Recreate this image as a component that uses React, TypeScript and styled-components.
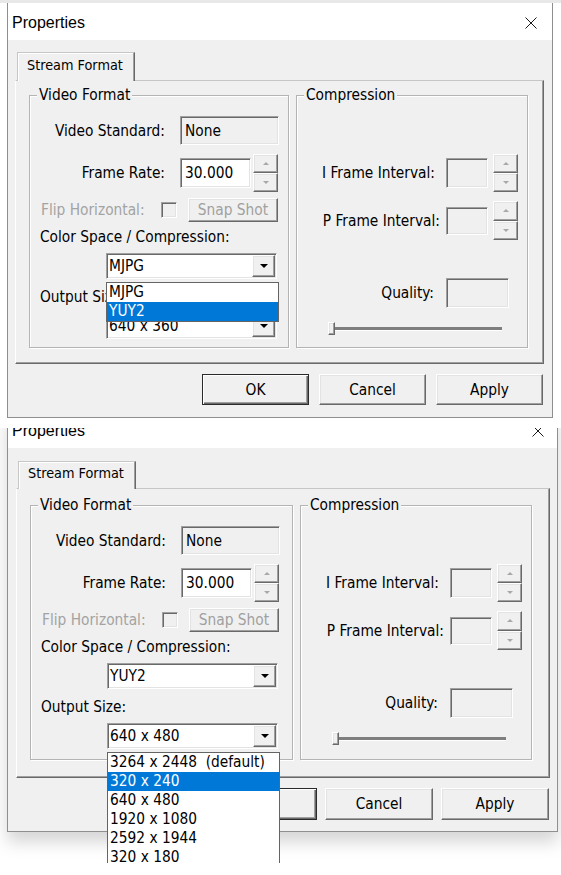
import React from 'react';
import styled, { createGlobalStyle, css } from 'styled-components';

const GlobalStyle = createGlobalStyle`
  html, body { margin: 0; padding: 0; background: #ffffff; }
  body {
    font-family: "DejaVu Sans Condensed", "DejaVu Sans", sans-serif;
    font-stretch: condensed;
    font-size: 15.3px;
    color: #000000;
  }
  * { box-sizing: border-box; }
`;

const sunken = css`
  border: 1px solid;
  border-color: #a0a0a0 #ffffff #ffffff #a0a0a0;
  box-shadow: inset 1px 1px 0 #696969, inset -1px -1px 0 #e3e3e3;
`;

const raised = css`
  border: 1px solid;
  border-color: #ffffff #696969 #696969 #ffffff;
  box-shadow: inset -1px -1px 0 #a0a0a0, inset 1px 1px 0 #e3e3e3;
`;

const Page = styled.div`
  width: 561px;
  height: 875px;
  overflow: hidden;
  background: #ffffff;
  display: flex;
  flex-direction: column;
`;

const TopEdge = styled.div`
  flex: none;
  height: 3px;
  background: #e8e8e8;
`;

const Seam = styled.div`
  flex: none;
  height: 10px;
`;

const Crop = styled.div`
  flex: none;
  height: 435px;
  overflow: hidden;
`;

const Window = styled.div<{ $w: number; $mt: number; $shadow: boolean }>`
  flex: none;
  position: relative;
  width: ${p => p.$w}px;
  margin: ${p => p.$mt}px 0 0 7px;
  border: 1px solid #8f8f8f;
  border-top: 0;
  background: #f0f0f0;
  display: flex;
  flex-direction: column;
  ${p => p.$shadow && css`box-shadow: 0 10px 16px rgba(0, 0, 0, 0.17);`}
`;

const TitleBar = styled.div<{ $pr: number }>`
  flex: none;
  height: 37px;
  background: #ffffff;
  display: flex;
  align-items: flex-start;
  justify-content: space-between;
  padding: 11px ${p => p.$pr}px 0 4px;
`;

const TitleText = styled.span`
  font-family: "Liberation Sans", Arial, sans-serif;
  font-stretch: normal;
  font-size: 16px;
  line-height: 18px;
  color: #000000;
`;

const CloseGlyph = styled.svg`
  flex: none;
  margin-top: 3px;
`;

const Body = styled.div<{ $pt: number; $pb: number }>`
  display: flex;
  flex-direction: column;
  padding: ${p => p.$pt}px 0 ${p => p.$pb}px;
`;

const TabStrip = styled.div<{ $pl: number }>`
  position: relative;
  z-index: 1;
  display: flex;
  padding-left: ${p => p.$pl}px;
  margin-bottom: -1px;
`;

const Tab = styled.div<{ $h: number; $pt: number }>`
  width: 118px;
  height: ${p => p.$h}px;
  padding: ${p => p.$pt}px 0 0 9px;
  font-size: 14.3px;
  line-height: 18px;
  background: #f0f0f0;
  border-top: 1px solid #c6c6c6;
  border-left: 1px solid #c6c6c6;
  border-right: 1px solid #696969;
  box-shadow: inset -1px 0 0 #a0a0a0, inset 1px 1px 0 #ffffff;
  white-space: nowrap;
`;

const Panel = styled.div<{ $ml: number; $mr: number; $pt: number; $pb: number; $pl: number }>`
  display: flex;
  align-items: flex-start;
  gap: 7px;
  margin: 0 ${p => p.$mr}px 0 ${p => p.$ml}px;
  padding: ${p => p.$pt}px 0 ${p => p.$pb}px ${p => p.$pl}px;
  border-top: 1px solid #c6c6c6;
  border-left: 1px solid #ffffff;
  border-right: 1px solid #696969;
  border-bottom: 1px solid #696969;
  box-shadow: inset -1px -1px 0 #a0a0a0;
`;

const Group = styled.fieldset<{ $w: number; $h: number }>`
  flex: none;
  margin: 0;
  padding: 0;
  min-width: 0;
  width: ${p => p.$w}px;
  height: ${p => p.$h}px;
  border: 1px solid #b4b4b4;
  box-shadow: inset 1px 1px 0 #ffffff, 1px 1px 0 #ffffff;
`;

const Caption = styled.legend`
  margin-left: 7px;
  padding: 0 2px;
  line-height: 17px;
  background: #f0f0f0;
  white-space: nowrap;
`;

const GroupBody = styled.div<{ $pl: number }>`
  display: flex;
  flex-direction: column;
  padding-left: ${p => p.$pl}px;
`;

const Row = styled.div<{ $mt: number; $h: number }>`
  flex: none;
  display: flex;
  align-items: center;
  margin-top: ${p => p.$mt}px;
  height: ${p => p.$h}px;
`;

const FieldLabel = styled.span<{ $w: number; $pr?: number; $pl?: number; $left?: boolean; $muted?: boolean }>`
  flex: none;
  width: ${p => p.$w}px;
  padding-right: ${p => p.$pr ?? 0}px;
  padding-left: ${p => p.$pl ?? 0}px;
  text-align: ${p => (p.$left ? 'left' : 'right')};
  line-height: 18px;
  white-space: nowrap;
  color: ${p => (p.$muted ? '#a3a3a3' : '#000000')};
`;

const PlainLabel = styled.div<{ $mt: number }>`
  flex: none;
  margin-top: ${p => p.$mt}px;
  line-height: 18px;
  white-space: nowrap;
`;

const TextBox = styled.div<{ $w: number; $h: number; $readOnly?: boolean }>`
  ${sunken};
  flex: none;
  width: ${p => p.$w}px;
  height: ${p => p.$h}px;
  padding-left: 4px;
  display: flex;
  align-items: center;
  line-height: 18px;
  background: ${p => (p.$readOnly ? '#f0f0f0' : '#ffffff')};
`;

const Spin = styled.div<{ $h: number; $ml: number }>`
  flex: none;
  width: 25px;
  height: ${p => p.$h}px;
  margin-left: ${p => p.$ml}px;
  display: flex;
  flex-direction: column;
`;

const SpinButton = styled.div`
  ${raised};
  flex: 1;
  display: flex;
  align-items: center;
  justify-content: center;
  background: #f0f0f0;
`;

const Triangle = styled.span<{ $up?: boolean; $half: number; $h: number; $color: string }>`
  display: block;
  width: 0;
  height: 0;
  border-left: ${p => p.$half}px solid transparent;
  border-right: ${p => p.$half}px solid transparent;
  ${p =>
    p.$up
      ? css`border-bottom: ${p.$h}px solid ${p.$color};`
      : css`border-top: ${p.$h}px solid ${p.$color};`}
`;

const CheckBox = styled.span`
  ${sunken};
  flex: none;
  width: 16px;
  height: 16px;
  background: #f0f0f0;
`;

const PushButton = styled.button<{ $w: number; $h: number; $ml?: number; $isDefault?: boolean }>`
  ${raised};
  flex: none;
  width: ${p => p.$w}px;
  height: ${p => p.$h}px;
  margin: 0 0 0 ${p => p.$ml ?? 0}px;
  padding: 0;
  font: inherit;
  font-stretch: condensed;
  line-height: 18px;
  background: #f0f0f0;
  color: #000000;
  &:disabled {
    color: #a0a0a0;
  }
  ${p =>
    p.$isDefault &&
    css`
      border: 1px solid #2a2a2a;
      box-shadow: inset 1px 1px 0 #ffffff, inset -1px -1px 0 #696969, inset -2px -2px 0 #a0a0a0;
    `}
`;

const ComboSlot = styled.div<{ $mt: number }>`
  flex: none;
  position: relative;
  margin: ${p => p.$mt}px 0 0 66px;
  width: 171px;
  height: 26px;
`;

const ComboBox = styled.div`
  ${sunken};
  height: 100%;
  padding: 1px;
  background: #ffffff;
  display: flex;
`;

const ComboValue = styled.span`
  flex: 1;
  padding-left: 1px;
  line-height: 22px;
  white-space: nowrap;
  overflow: hidden;
`;

const ComboButton = styled.span`
  ${raised};
  flex: none;
  width: 23px;
  display: flex;
  align-items: center;
  justify-content: center;
  background: #f0f0f0;
`;

const DropList = styled.ul`
  position: absolute;
  z-index: 10;
  top: calc(100% + 3px);
  left: 0;
  width: 173px;
  margin: 0;
  padding: 0;
  list-style: none;
  background: #ffffff;
  border: 1px solid #646464;
`;

const DropItem = styled.li<{ $selected?: boolean }>`
  height: 19px;
  line-height: 19px;
  padding-left: 2px;
  white-space: pre;
  background: ${p => (p.$selected ? '#0078d7' : '#ffffff')};
  color: ${p => (p.$selected ? '#ffffff' : '#000000')};
`;

const Slider = styled.div<{ $mt: number }>`
  flex: none;
  position: relative;
  margin: ${p => p.$mt}px 0 0 31px;
  width: 174px;
  height: 13px;
  &::before {
    content: '';
    position: absolute;
    left: 2px;
    right: 0;
    top: 5px;
    height: 3px;
    background: #7e7e7e;
    border-bottom: 1px solid #ffffff;
  }
`;

const SliderThumb = styled.span`
  ${raised};
  position: relative;
  display: block;
  width: 7px;
  height: 13px;
  background: #f0f0f0;
`;

const ButtonRow = styled.div<{ $gap: number; $pr: number; $mt: number }>`
  display: flex;
  justify-content: flex-end;
  gap: ${p => p.$gap}px;
  padding-right: ${p => p.$pr}px;
  margin-top: ${p => p.$mt}px;
`;

type Variant = {
  width: number;
  mt: number;
  shadow: boolean;
  closePr: number;
  bodyPt: number;
  bodyPb: number;
  tabPl: number;
  tabH: number;
  tabPt: number;
  panelMl: number;
  panelMr: number;
  panelPt: number;
  panelPb: number;
  panelPl: number;
  vfW: number;
  groupH: number;
  btnW: number;
  btnH: number;
  btnGap: number;
  btnPr: number;
  colorValue: string;
  outputValue: string;
  open: 'color' | 'output';
};

const colorItems = ['MJPG', 'YUY2'];
const sizeItems = [
  '3264 x 2448  (default)',
  '320 x 240',
  '640 x 480',
  '1920 x 1080',
  '2592 x 1944',
  '320 x 180',
  '1280 x 720',
];

const first: Variant = {
  width: 546,
  mt: 0,
  shadow: false,
  closePr: 15,
  bodyPt: 12,
  bodyPb: 12,
  tabPl: 9,
  tabH: 29,
  tabPt: 3,
  panelMl: 7,
  panelMr: 8,
  panelPt: 6,
  panelPb: 15,
  panelPl: 13,
  vfW: 260,
  groupH: 261,
  btnW: 107,
  btnH: 31,
  btnGap: 10,
  btnPr: 9,
  colorValue: 'MJPG',
  outputValue: '640 x 360',
  open: 'color',
};

const second: Variant = {
  width: 551,
  mt: -17,
  shadow: true,
  closePr: 13,
  bodyPt: 13,
  bodyPb: 11,
  tabPl: 10,
  tabH: 28,
  tabPt: 2,
  panelMl: 8,
  panelMr: 7,
  panelPt: 8,
  panelPb: 17,
  panelPl: 13,
  vfW: 263,
  groupH: 263,
  btnW: 108,
  btnH: 32,
  btnGap: 8,
  btnPr: 8,
  colorValue: 'YUY2',
  outputValue: '640 x 480',
  open: 'output',
};

function SpinControl({ h, ml }: { h: number; ml: number }) {
  return (
    <Spin $h={h} $ml={ml}>
      <SpinButton>
        <Triangle $up $half={3} $h={3} $color="#a8a8a8" />
      </SpinButton>
      <SpinButton>
        <Triangle $half={3} $h={3} $color="#a8a8a8" />
      </SpinButton>
    </Spin>
  );
}

function Combo({
  mt,
  value,
  items,
  selected,
}: {
  mt: number;
  value: string;
  items?: string[];
  selected?: number;
}) {
  return (
    <ComboSlot $mt={mt}>
      <ComboBox>
        <ComboValue>{value}</ComboValue>
        <ComboButton>
          <Triangle $half={4} $h={4} $color="#000000" />
        </ComboButton>
      </ComboBox>
      {items && (
        <DropList>
          {items.map((it, i) => (
            <DropItem key={it} $selected={i === selected}>
              {it}
            </DropItem>
          ))}
        </DropList>
      )}
    </ComboSlot>
  );
}

function PropertiesDialog({ v }: { v: Variant }) {
  return (
    <Window $w={v.width} $mt={v.mt} $shadow={v.shadow}>
      <TitleBar $pr={v.closePr}>
        <TitleText>Properties</TitleText>
        <CloseGlyph width="12" height="12" viewBox="0 0 12 12">
          <path d="M0.5 0.5 L11.5 11.5 M11.5 0.5 L0.5 11.5" stroke="#1a1a1a" strokeWidth="1" fill="none" />
        </CloseGlyph>
      </TitleBar>
      <Body $pt={v.bodyPt} $pb={v.bodyPb}>
        <TabStrip $pl={v.tabPl}>
          <Tab $h={v.tabH} $pt={v.tabPt}>Stream Format</Tab>
        </TabStrip>
        <Panel $ml={v.panelMl} $mr={v.panelMr} $pt={v.panelPt} $pb={v.panelPb} $pl={v.panelPl}>
          <Group $w={v.vfW} $h={v.groupH}>
            <Caption>Video Format</Caption>
            <GroupBody $pl={10}>
              <Row $mt={12} $h={29}>
                <FieldLabel $w={140} $pr={15}>Video Standard:</FieldLabel>
                <TextBox $w={99} $h={29} $readOnly>None</TextBox>
              </Row>
              <Row $mt={9} $h={38}>
                <FieldLabel $w={140} $pr={15}>Frame Rate:</FieldLabel>
                <TextBox $w={71} $h={30}>30.000</TextBox>
                <SpinControl h={38} ml={2} />
              </Row>
              <Row $mt={6} $h={24}>
                <FieldLabel $w={121} $pl={1} $left $muted>Flip Horizontal:</FieldLabel>
                <CheckBox />
                <PushButton $w={90} $h={24} $ml={11} disabled>Snap Shot</PushButton>
              </Row>
              <PlainLabel $mt={6}>Color Space / Compression:</PlainLabel>
              <Combo
                mt={7}
                value={v.colorValue}
                items={v.open === 'color' ? colorItems : undefined}
                selected={1}
              />
              <PlainLabel $mt={9}>Output Size:</PlainLabel>
              <Combo
                mt={7}
                value={v.outputValue}
                items={v.open === 'output' ? sizeItems : undefined}
                selected={1}
              />
            </GroupBody>
          </Group>
          <Group $w={232} $h={v.groupH}>
            <Caption>Compression</Caption>
            <GroupBody $pl={0}>
              <Row $mt={50} $h={38}>
                <FieldLabel $w={149} $pr={11}>I Frame Interval:</FieldLabel>
                <TextBox $w={42} $h={30} $readOnly />
                <SpinControl h={38} ml={5} />
              </Row>
              <Row $mt={9} $h={39}>
                <FieldLabel $w={149} $pr={6}>P Frame Interval:</FieldLabel>
                <TextBox $w={42} $h={28} $readOnly />
                <SpinControl h={39} ml={5} />
              </Row>
              <Row $mt={38} $h={30}>
                <FieldLabel $w={149} $pr={12}>Quality:</FieldLabel>
                <TextBox $w={63} $h={30} $readOnly />
              </Row>
              <Slider $mt={14}>
                <SliderThumb />
              </Slider>
            </GroupBody>
          </Group>
        </Panel>
        <ButtonRow $gap={v.btnGap} $pr={v.btnPr} $mt={10}>
          <PushButton $w={v.btnW} $h={v.btnH} $isDefault>OK</PushButton>
          <PushButton $w={v.btnW} $h={v.btnH}>Cancel</PushButton>
          <PushButton $w={v.btnW} $h={v.btnH}>Apply</PushButton>
        </ButtonRow>
      </Body>
    </Window>
  );
}

export default function App() {
  return (
    <>
      <GlobalStyle />
      <Page>
        <TopEdge />
        <PropertiesDialog v={first} />
        <Seam />
        <Crop>
          <PropertiesDialog v={second} />
        </Crop>
      </Page>
    </>
  );
}
